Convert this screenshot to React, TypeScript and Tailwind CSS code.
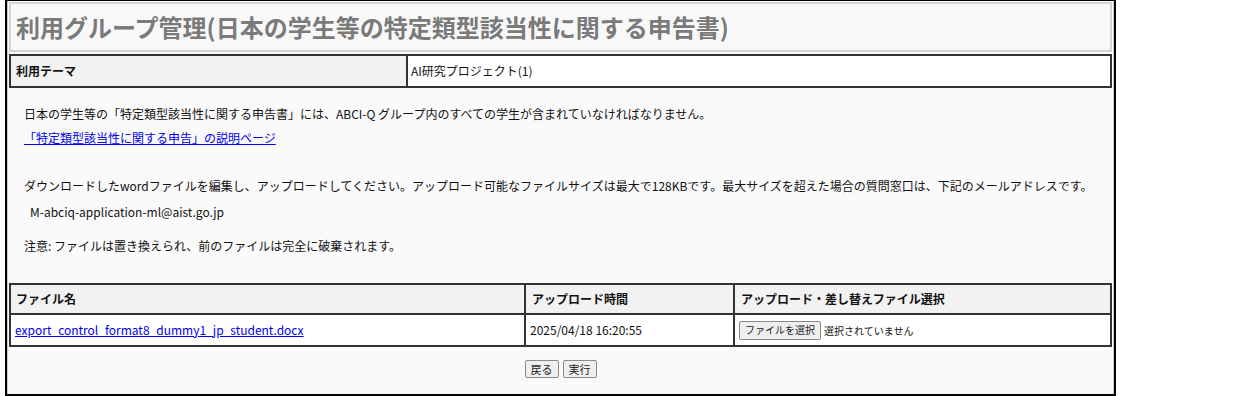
const font = { fontFamily: '"Noto Sans CJK JP", "Noto Sans", sans-serif' };

function Btn({ children, h = "h-[19px]", size = "text-[11px]" }: { children: React.ReactNode; h?: string; size?: string }) {
  return (
    <button className={`${h} ${size} rounded-[2px] border border-[#8a8a8a] bg-[#efefef] px-[5px] leading-none text-[#222]`}>
      {children}
    </button>
  );
}

export default function App() {
  return (
    <div className="h-[396px] bg-white" style={font}>
      <div className="ml-[5px] h-[396px] w-[1111px] border-2 border-t-[1px] border-black">
        <div className="h-full border-x border-[#c8c8c8] bg-[#fafafa] px-px pt-px">
          <div className="flex h-[50px] items-center border-2 border-[#d4d4d4] bg-[#f8f8f8] pl-[5px]">
            <h1 className="text-[24px] font-bold leading-none text-[#7a7a7a]">
              利用グループ管理(日本の学生等の特定類型該当性に関する申告書)
            </h1>
          </div>

          <table className="mt-[2px] w-full border-collapse border-2 border-[#333] text-[12px] text-[#111]">
            <tbody>
              <tr className="h-[32px]">
                <th className="w-[397px] border-2 border-[#333] bg-[#f2f2f2] pl-[5px] text-left font-bold">利用テーマ</th>
                <td className="border-2 border-[#333] bg-white pl-[3px]">AI研究プロジェクト(1)</td>
              </tr>
            </tbody>
          </table>

          <div className="mt-[14px] pl-[15px] text-[12px] leading-[24px] text-[#111]">
            <p>日本の学生等の「特定類型該当性に関する申告書」には、ABCI-Q グループ内のすべての学生が含まれていなければなりません。</p>
            <p>
              <a href="#" className="text-[#0000ee] underline">「特定類型該当性に関する申告」の説明ページ</a>
            </p>
            <p className="h-[24px]"></p>
            <p>ダウンロードしたwordファイルを編集し、アップロードしてください。アップロード可能なファイルサイズは最大で128KBです。最大サイズを超えた場合の質問窓口は、下記のメールアドレスです。</p>
            <p className="mt-[2px] pl-[6px]">M-abciq-application-ml@aist.go.jp</p>
            <p className="mt-[10px]">注意: ファイルは置き換えられ、前のファイルは完全に破棄されます。</p>
          </div>

          <table className="mt-[25px] w-full border-collapse border-2 border-[#333] text-[12px] text-[#111]">
            <thead>
              <tr className="h-[30px] bg-[#f2f2f2]">
                <th className="w-[515px] border-2 border-[#333] pl-[5px] text-left font-bold">ファイル名</th>
                <th className="w-[209px] border-2 border-[#333] pl-[6px] text-left font-bold">アップロード時間</th>
                <th className="border-2 border-[#333] pl-[6px] text-left font-bold">アップロード・差し替えファイル選択</th>
              </tr>
            </thead>
            <tbody>
              <tr className="h-[32px] bg-white">
                <td className="border-2 border-[#333] pl-[4px]">
                  <a href="#" className="text-[#0000ee] underline">export_control_format8_dummy1_jp_student.docx</a>
                </td>
                <td className="border-2 border-[#333] pl-[4px]">2025/04/18 16:20:55</td>
                <td className="border-2 border-[#333] pl-[4px]">
                  <div className="flex items-center gap-[3px] text-[10px]">
                    <Btn size="text-[10px]">ファイルを選択</Btn>
                    <span>選択されていません</span>
                  </div>
                </td>
              </tr>
            </tbody>
          </table>

          <div className="mt-[13px] flex justify-center gap-[4px]">
            <Btn h="h-[18px]">戻る</Btn>
            <Btn h="h-[18px]">実行</Btn>
          </div>
        </div>
      </div>
    </div>
  );
}
